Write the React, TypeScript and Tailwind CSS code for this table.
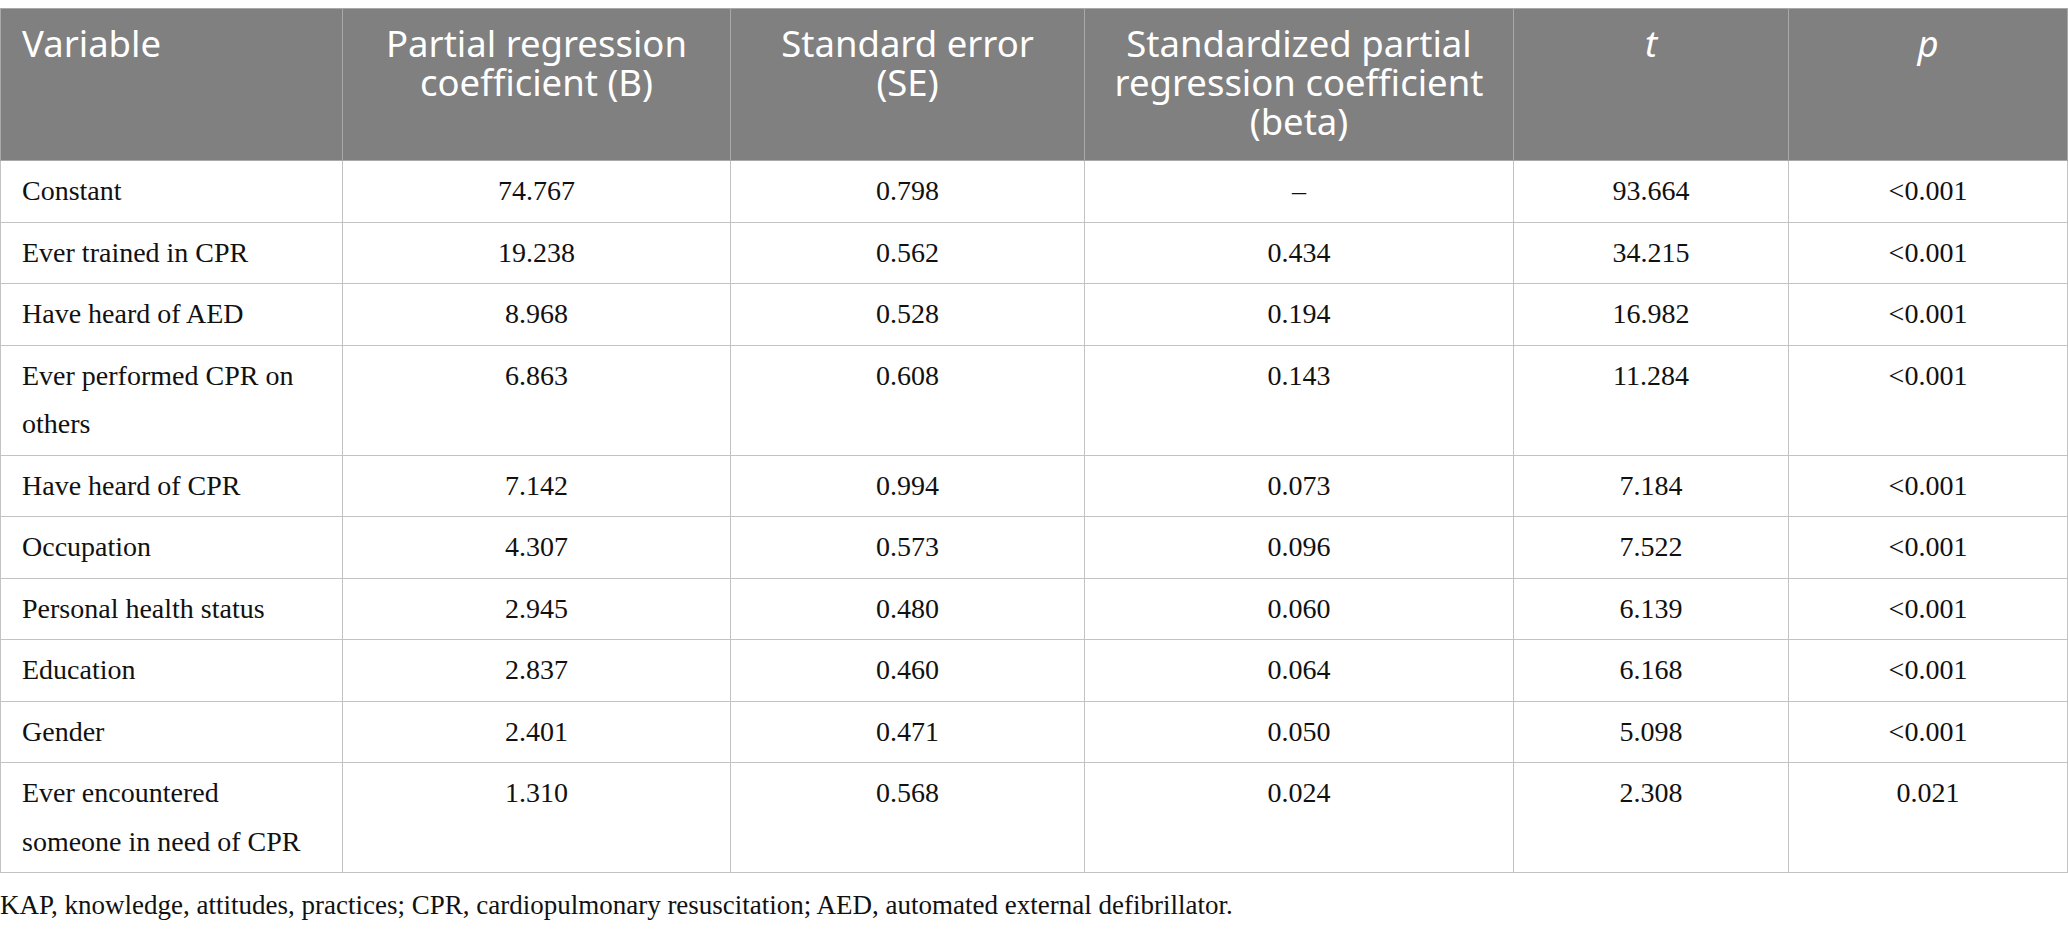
import React from "react";

type Row = {
  name: string;
  b: string;
  se: string;
  beta: string;
  t: string;
  p: string;
};

const rows: Row[] = [
  { name: "Constant", b: "74.767", se: "0.798", beta: "–", t: "93.664", p: "<0.001" },
  { name: "Ever trained in CPR", b: "19.238", se: "0.562", beta: "0.434", t: "34.215", p: "<0.001" },
  { name: "Have heard of AED", b: "8.968", se: "0.528", beta: "0.194", t: "16.982", p: "<0.001" },
  { name: "Ever performed CPR on others", b: "6.863", se: "0.608", beta: "0.143", t: "11.284", p: "<0.001" },
  { name: "Have heard of CPR", b: "7.142", se: "0.994", beta: "0.073", t: "7.184", p: "<0.001" },
  { name: "Occupation", b: "4.307", se: "0.573", beta: "0.096", t: "7.522", p: "<0.001" },
  { name: "Personal health status", b: "2.945", se: "0.480", beta: "0.060", t: "6.139", p: "<0.001" },
  { name: "Education", b: "2.837", se: "0.460", beta: "0.064", t: "6.168", p: "<0.001" },
  { name: "Gender", b: "2.401", se: "0.471", beta: "0.050", t: "5.098", p: "<0.001" },
  { name: "Ever encountered someone in need of CPR", b: "1.310", se: "0.568", beta: "0.024", t: "2.308", p: "0.021" },
];

const th =
  "border border-[#a9a9a9] align-top pt-[15px] pb-[19px] px-[21px] font-normal leading-[39px] text-center";
const td =
  "border border-[#c3c3c3] align-top pt-[6px] pb-[6px] px-[21px] leading-[48.5px] text-center";

export default function App() {
  return (
    <div className="w-[2068px] h-[930px] bg-white pt-[8px]">
      <table className="w-[2067px] table-fixed border-collapse">
        <colgroup>
          <col className="w-[342px]" />
          <col className="w-[388px]" />
          <col className="w-[354px]" />
          <col className="w-[429px]" />
          <col className="w-[275px]" />
          <col className="w-[279px]" />
        </colgroup>
        <thead>
          <tr className="bg-[#7f807f] text-white text-[36.5px] font-['Noto_Sans',sans-serif]">
            <th className={th + " text-left"}>Variable</th>
            <th className={th}>Partial regression coefficient (B)</th>
            <th className={th}>Standard error (SE)</th>
            <th className={th}>Standardized partial regression coefficient (beta)</th>
            <th className={th}>
              <i>t</i>
            </th>
            <th className={th}>
              <i>p</i>
            </th>
          </tr>
        </thead>
        <tbody className="text-[28px] text-[#111] font-['Liberation_Serif',serif]">
          {rows.map((r) => (
            <tr key={r.name}>
              <td className={td + " text-left"}>{r.name}</td>
              <td className={td}>{r.b}</td>
              <td className={td}>{r.se}</td>
              <td className={td}>{r.beta}</td>
              <td className={td}>{r.t}</td>
              <td className={td}>{r.p}</td>
            </tr>
          ))}
        </tbody>
      </table>
      <p className="mt-[15px] text-[27px] leading-[34px] text-[#111] font-['Liberation_Serif',serif]">
        KAP, knowledge, attitudes, practices; CPR, cardiopulmonary resuscitation; AED, automated external defibrillator.
      </p>
    </div>
  );
}
